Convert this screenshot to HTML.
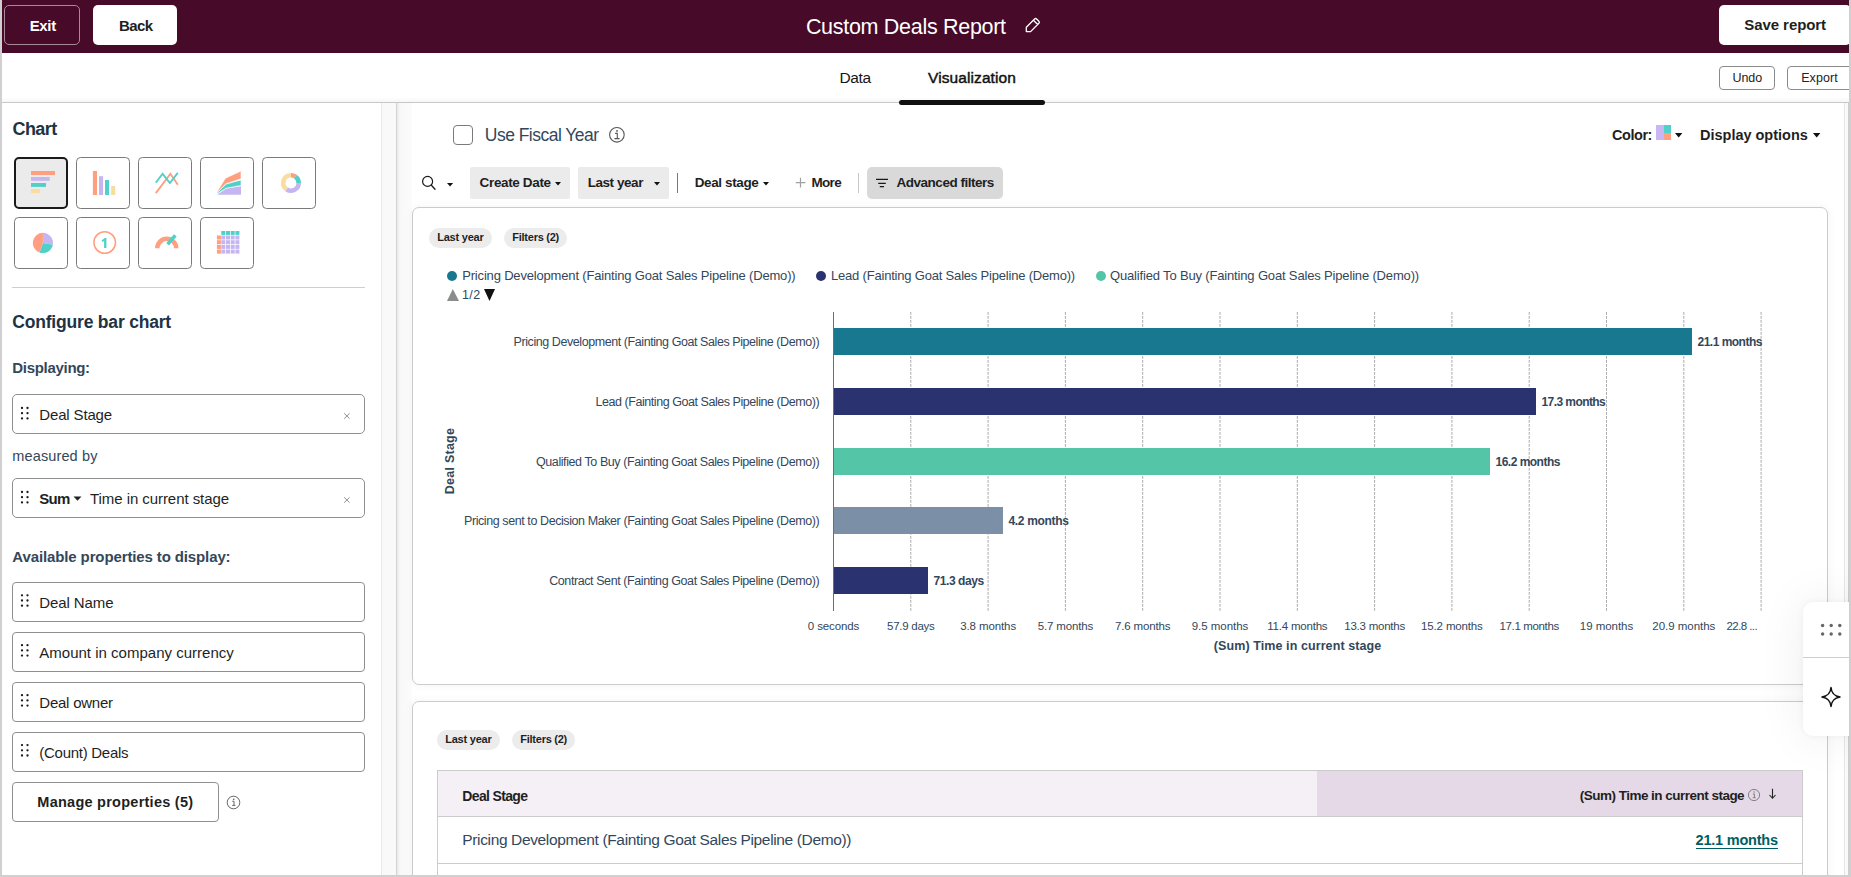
<!DOCTYPE html>
<html><head><meta charset="utf-8"><title>Custom Deals Report</title>
<style>
html,body{margin:0;padding:0;}
body{width:1851px;height:877px;overflow:hidden;position:relative;background:#fff;font-family:"Liberation Sans",sans-serif;}
.b{position:absolute;}
.t{position:absolute;white-space:nowrap;line-height:1;}
svg.b{overflow:visible;}
</style></head><body>
<div class="b" style="left:0px;top:0px;width:1851px;height:877px;background:#fff"></div>
<div class="b" style="left:0px;top:0px;width:1851px;height:53px;background:#470a29"></div>
<div class="b" style="left:4px;top:5px;width:76px;height:40px;border:1px solid #a58a97;border-radius:5px;box-sizing:border-box"></div>
<div class="t" style="left:29.70px;top:17.90px;font-size:15px;font-weight:bold;color:#ffffff;letter-spacing:-0.352px;">Exit</div>
<div class="b" style="left:93px;top:5px;width:84px;height:40px;background:#fff;border-radius:5px"></div>
<div class="t" style="left:118.90px;top:17.90px;font-size:15px;font-weight:bold;color:#1f1f1f;letter-spacing:-0.515px;">Back</div>
<div class="t" style="left:805.90px;top:16.80px;font-size:21.5px;font-weight:normal;color:#ffffff;letter-spacing:-0.296px;">Custom Deals Report</div>
<svg class="b" style="left:1024px;top:17px" width="18" height="17" viewBox="0 0 18 17"><path d="M2.3,10.3 L10.6,2 Q11.6,1 12.6,2 L14.9,4.3 Q15.9,5.3 14.9,6.3 L6.6,14.6 L2.3,14.6 Z M9.4,3.2 L13.7,7.5" fill="none" stroke="#fff" stroke-width="1.3" stroke-linejoin="round"/></svg>
<div class="b" style="left:1719px;top:5px;width:132px;height:40px;background:#fff;border-radius:5px"></div>
<div class="t" style="left:1744.30px;top:17.40px;font-size:15px;font-weight:bold;color:#1f1f1f;letter-spacing:-0.076px;">Save report</div>
<div class="b" style="left:0px;top:97px;width:1851px;height:5px;background:linear-gradient(to bottom,rgba(0,0,0,0),rgba(0,0,0,0.035))"></div>
<div class="b" style="left:0px;top:102px;width:1851px;height:1px;background:#c8c8c8"></div>
<div class="t" style="left:839.40px;top:70.08px;font-size:15.5px;font-weight:normal;color:#151515;letter-spacing:-0.360px;">Data</div>
<div class="t" style="left:928.00px;top:70.08px;font-size:15.5px;font-weight:normal;color:#111;letter-spacing:0.097px;-webkit-text-stroke:0.45px #111;">Visualization</div>
<div class="b" style="left:899px;top:100px;width:146px;height:5px;background:#111;border-radius:2.5px"></div>
<div class="b" style="left:1719px;top:66px;width:56px;height:24px;border:1px solid #8a8a8a;border-radius:4px;box-sizing:border-box"></div>
<div class="t" style="left:1732.40px;top:71.92px;font-size:12.5px;font-weight:normal;color:#222;letter-spacing:-0.020px;">Undo</div>
<div class="b" style="left:1787px;top:66px;width:70px;height:24px;border:1px solid #8a8a8a;border-radius:4px;box-sizing:border-box"></div>
<div class="t" style="left:1801.20px;top:71.92px;font-size:12.5px;font-weight:normal;color:#222;letter-spacing:0.079px;">Export</div>
<div class="b" style="left:381px;top:103px;width:15px;height:772px;background:#f9f9f9;border-left:1px solid #e8e8e8;box-sizing:border-box"></div>
<div class="b" style="left:396px;top:103px;width:1px;height:772px;background:#d2d2d2"></div>
<div class="b" style="left:397px;top:103px;width:15px;height:772px;background:linear-gradient(to right,#e9e9e9,#f8f8f8 3px,#fcfcfc)"></div>
<div class="b" style="left:0px;top:0px;width:2px;height:877px;background:#d0d0d0"></div>
<div class="b" style="left:1849px;top:0px;width:2px;height:877px;background:#d0d0d0"></div>
<div class="b" style="left:0px;top:875px;width:1851px;height:2px;background:#d0d0d0"></div>
<div class="t" style="left:12.50px;top:119.86px;font-size:18px;font-weight:bold;color:#213343;letter-spacing:-0.561px;">Chart</div>
<div class="b" style="left:14px;top:157px;width:54px;height:52px;background:#ebebeb;border:2px solid #1a1a1a;border-radius:5px;box-sizing:border-box"></div>
<div class="b" style="left:76px;top:157px;width:54px;height:52px;background:#fff;border:1.5px solid #7a7a7a;border-radius:4.5px;box-sizing:border-box"></div>
<div class="b" style="left:138px;top:157px;width:54px;height:52px;background:#fff;border:1.5px solid #7a7a7a;border-radius:4.5px;box-sizing:border-box"></div>
<div class="b" style="left:200px;top:157px;width:54px;height:52px;background:#fff;border:1.5px solid #7a7a7a;border-radius:4.5px;box-sizing:border-box"></div>
<div class="b" style="left:262px;top:157px;width:54px;height:52px;background:#fff;border:1.5px solid #7a7a7a;border-radius:4.5px;box-sizing:border-box"></div>
<div class="b" style="left:14px;top:217px;width:54px;height:52px;background:#fff;border:1.5px solid #7a7a7a;border-radius:4.5px;box-sizing:border-box"></div>
<div class="b" style="left:76px;top:217px;width:54px;height:52px;background:#fff;border:1.5px solid #7a7a7a;border-radius:4.5px;box-sizing:border-box"></div>
<div class="b" style="left:138px;top:217px;width:54px;height:52px;background:#fff;border:1.5px solid #7a7a7a;border-radius:4.5px;box-sizing:border-box"></div>
<div class="b" style="left:200px;top:217px;width:54px;height:52px;background:#fff;border:1.5px solid #7a7a7a;border-radius:4.5px;box-sizing:border-box"></div>
<svg class="b" style="left:0;top:0" width="400" height="300" viewBox="0 0 400 300">
<rect x="31" y="171" width="24" height="4" fill="#ff9f80"/>
<rect x="31" y="177" width="18.7" height="3.8" fill="#c5b6f2"/>
<rect x="31" y="183" width="15" height="3.9" fill="#4fd0c8"/>
<rect x="31" y="189" width="9" height="4" fill="#f9dca0"/>
<rect x="92.9" y="171" width="4.1" height="24" fill="#ff9f80"/>
<rect x="99" y="176.2" width="4.1" height="18.8" fill="#c5b6f2"/>
<rect x="105" y="180" width="4" height="15" fill="#4fd0c8"/>
<rect x="111.1" y="186" width="4.1" height="9" fill="#f9dca0"/>
<polyline points="155.8,193.1 170.4,173.8 177.8,184.7" fill="none" stroke="#ff9f80" stroke-width="1.9"/>
<polyline points="155.8,182.8 162.6,173.8 169.9,183 177.8,172.8" fill="none" stroke="#4fd0c8" stroke-width="1.9"/>
<polygon points="217.2,194.8 226.1,188.5 241,186.3 241,194.8" fill="#c5b6f2"/>
<polygon points="217.2,192.6 226.1,184.1 241,180 241,185.4 226.1,188.2 217.2,193.7" fill="#4fd0c8" stroke="#fff" stroke-width="0.6"/>
<polygon points="217.2,191.5 225.4,178.2 241,171.1 241,178.8 226.1,183.7 217.2,192.3" fill="#ff9f80" stroke="#fff" stroke-width="0.6"/>

<path d="M291.00,175.30 A7.7,7.7 0 0 1 295.42,176.69" fill="none" stroke="#ff9f80" stroke-width="4.6"/>
<path d="M295.42,176.69 A7.7,7.7 0 0 1 298.70,183.00" fill="none" stroke="#4fd0c8" stroke-width="4.6"/>
<path d="M298.70,183.00 A7.7,7.7 0 0 1 286.58,189.31" fill="none" stroke="#c5b6f2" stroke-width="4.6"/>
<path d="M286.58,189.31 A7.7,7.7 0 0 1 291.00,175.30" fill="none" stroke="#f9dca0" stroke-width="4.6"/>
<path d="M42.9,242.9 L42.90,232.80 A10.1,10.1 0 0 1 52.85,244.65 Z" fill="#c5b6f2"/>
<path d="M42.9,242.9 L52.85,244.65 A10.1,10.1 0 0 1 39.45,252.39 Z" fill="#4fd0c8"/>
<path d="M42.9,242.9 L39.45,252.39 A10.1,10.1 0 0 1 42.90,232.80 Z" fill="#ff9f80"/>
<circle cx="104.7" cy="242.5" r="10.8" fill="none" stroke="#ff9f80" stroke-width="1.5"/>
<path d="M101.6,240.4 L104.7,237.9 L106.4,237.9 L106.4,247.9 L104.1,247.9 L104.1,240.9 L102.5,242.1 Z" fill="#4fd0c8"/>
<path d="M157.3,248.3 A9.45,9.45 0 0 1 176.2,248.3" fill="none" stroke="#ff9f80" stroke-width="4.5"/>
<line x1="167.6" y1="244.2" x2="175.3" y2="235.4" stroke="#4fd0c8" stroke-width="3.6"/>
<rect x="221.30" y="231" width="4" height="3.9" fill="#4fd0c8"/>
<rect x="226.00" y="231" width="4" height="3.9" fill="#4fd0c8"/>
<rect x="230.70" y="231" width="4" height="3.9" fill="#4fd0c8"/>
<rect x="235.40" y="231" width="4" height="3.9" fill="#4fd0c8"/>
<rect x="216.9" y="235.50" width="4" height="4" fill="#ff9f80"/>
<rect x="221.30" y="235.50" width="4" height="4" fill="#c5b6f2"/>
<rect x="226.00" y="235.50" width="4" height="4" fill="#c5b6f2"/>
<rect x="230.70" y="235.50" width="4" height="4" fill="#c5b6f2"/>
<rect x="235.40" y="235.50" width="4" height="4" fill="#c5b6f2"/>
<rect x="216.9" y="240.20" width="4" height="4" fill="#ff9f80"/>
<rect x="221.30" y="240.20" width="4" height="4" fill="#c5b6f2"/>
<rect x="226.00" y="240.20" width="4" height="4" fill="#c5b6f2"/>
<rect x="230.70" y="240.20" width="4" height="4" fill="#c5b6f2"/>
<rect x="235.40" y="240.20" width="4" height="4" fill="#c5b6f2"/>
<rect x="216.9" y="244.90" width="4" height="4" fill="#ff9f80"/>
<rect x="221.30" y="244.90" width="4" height="4" fill="#c5b6f2"/>
<rect x="226.00" y="244.90" width="4" height="4" fill="#c5b6f2"/>
<rect x="230.70" y="244.90" width="4" height="4" fill="#c5b6f2"/>
<rect x="235.40" y="244.90" width="4" height="4" fill="#c5b6f2"/>
<rect x="216.9" y="249.60" width="4" height="4" fill="#ff9f80"/>
<rect x="221.30" y="249.60" width="4" height="4" fill="#c5b6f2"/>
<rect x="226.00" y="249.60" width="4" height="4" fill="#c5b6f2"/>
<rect x="230.70" y="249.60" width="4" height="4" fill="#c5b6f2"/>
<rect x="235.40" y="249.60" width="4" height="4" fill="#c5b6f2"/>
</svg>
<div class="b" style="left:12px;top:287px;width:353px;height:1px;background:#cfcfcf"></div>
<div class="t" style="left:12.30px;top:313.69px;font-size:17.5px;font-weight:bold;color:#213343;letter-spacing:-0.194px;">Configure bar chart</div>
<div class="t" style="left:12.30px;top:360.10px;font-size:15px;font-weight:bold;color:#33475b;letter-spacing:-0.304px;">Displaying:</div>
<div class="b" style="left:12px;top:394px;width:353px;height:40px;border:1px solid #8f8f8f;border-radius:5px;box-sizing:border-box"></div>
<svg class="b" style="left:0;top:0" width="40" height="877"><circle cx="22.0" cy="408.0" r="1.15" fill="#1a1a1a"/><circle cx="27.5" cy="408.0" r="1.15" fill="#1a1a1a"/><circle cx="22.0" cy="413.2" r="1.15" fill="#1a1a1a"/><circle cx="27.5" cy="413.2" r="1.15" fill="#1a1a1a"/><circle cx="22.0" cy="418.4" r="1.15" fill="#1a1a1a"/><circle cx="27.5" cy="418.4" r="1.15" fill="#1a1a1a"/></svg>
<div class="t" style="left:39.30px;top:407.30px;font-size:15px;font-weight:normal;color:#1f1f1f;letter-spacing:-0.152px;">Deal Stage</div>
<svg class="b" style="left:342px;top:410px" width="10" height="10"><path d="M2.2,3.3 L7.6,8.7 M7.6,3.3 L2.2,8.7" stroke="#8a8a8a" stroke-width="0.95"/></svg>
<div class="t" style="left:12.30px;top:448.73px;font-size:14.5px;font-weight:normal;color:#33475b;letter-spacing:0.126px;">measured by</div>
<div class="b" style="left:12px;top:478px;width:353px;height:40px;border:1px solid #8f8f8f;border-radius:5px;box-sizing:border-box"></div>
<svg class="b" style="left:0;top:0" width="40" height="877"><circle cx="22.0" cy="492.0" r="1.15" fill="#1a1a1a"/><circle cx="27.5" cy="492.0" r="1.15" fill="#1a1a1a"/><circle cx="22.0" cy="497.2" r="1.15" fill="#1a1a1a"/><circle cx="27.5" cy="497.2" r="1.15" fill="#1a1a1a"/><circle cx="22.0" cy="502.4" r="1.15" fill="#1a1a1a"/><circle cx="27.5" cy="502.4" r="1.15" fill="#1a1a1a"/></svg>
<div class="t" style="left:39.30px;top:491.10px;font-size:15px;font-weight:bold;color:#1f1f1f;letter-spacing:-0.768px;">Sum</div>
<svg class="b" style="left:73px;top:496px" width="10" height="6"><path d="M0.5,0.5 L8.5,0.5 L4.5,4.8 Z" fill="#222"/></svg>
<div class="t" style="left:90.00px;top:491.10px;font-size:15px;font-weight:normal;color:#1f1f1f;letter-spacing:-0.063px;">Time in current stage</div>
<svg class="b" style="left:342px;top:494px" width="10" height="10"><path d="M2.2,3.3 L7.6,8.7 M7.6,3.3 L2.2,8.7" stroke="#8a8a8a" stroke-width="0.95"/></svg>
<div class="t" style="left:12.30px;top:549.20px;font-size:15px;font-weight:bold;color:#33475b;letter-spacing:-0.119px;">Available properties to display:</div>
<div class="b" style="left:12px;top:582px;width:353px;height:40px;border:1px solid #8f8f8f;border-radius:4px;box-sizing:border-box"></div>
<svg class="b" style="left:0;top:0" width="40" height="877"><circle cx="22.0" cy="595.3" r="1.15" fill="#1a1a1a"/><circle cx="27.5" cy="595.3" r="1.15" fill="#1a1a1a"/><circle cx="22.0" cy="600.5" r="1.15" fill="#1a1a1a"/><circle cx="27.5" cy="600.5" r="1.15" fill="#1a1a1a"/><circle cx="22.0" cy="605.7" r="1.15" fill="#1a1a1a"/><circle cx="27.5" cy="605.7" r="1.15" fill="#1a1a1a"/></svg>
<div class="t" style="left:39.30px;top:594.80px;font-size:15px;font-weight:normal;color:#1f1f1f;letter-spacing:-0.092px;">Deal Name</div>
<div class="b" style="left:12px;top:632px;width:353px;height:40px;border:1px solid #8f8f8f;border-radius:4px;box-sizing:border-box"></div>
<svg class="b" style="left:0;top:0" width="40" height="877"><circle cx="22.0" cy="645.2" r="1.15" fill="#1a1a1a"/><circle cx="27.5" cy="645.2" r="1.15" fill="#1a1a1a"/><circle cx="22.0" cy="650.4" r="1.15" fill="#1a1a1a"/><circle cx="27.5" cy="650.4" r="1.15" fill="#1a1a1a"/><circle cx="22.0" cy="655.6" r="1.15" fill="#1a1a1a"/><circle cx="27.5" cy="655.6" r="1.15" fill="#1a1a1a"/></svg>
<div class="t" style="left:39.30px;top:644.70px;font-size:15px;font-weight:normal;color:#1f1f1f;letter-spacing:0.010px;">Amount in company currency</div>
<div class="b" style="left:12px;top:682px;width:353px;height:40px;border:1px solid #8f8f8f;border-radius:4px;box-sizing:border-box"></div>
<svg class="b" style="left:0;top:0" width="40" height="877"><circle cx="22.0" cy="695.2" r="1.15" fill="#1a1a1a"/><circle cx="27.5" cy="695.2" r="1.15" fill="#1a1a1a"/><circle cx="22.0" cy="700.4" r="1.15" fill="#1a1a1a"/><circle cx="27.5" cy="700.4" r="1.15" fill="#1a1a1a"/><circle cx="22.0" cy="705.6" r="1.15" fill="#1a1a1a"/><circle cx="27.5" cy="705.6" r="1.15" fill="#1a1a1a"/></svg>
<div class="t" style="left:39.30px;top:694.70px;font-size:15px;font-weight:normal;color:#1f1f1f;letter-spacing:-0.237px;">Deal owner</div>
<div class="b" style="left:12px;top:732px;width:353px;height:40px;border:1px solid #8f8f8f;border-radius:4px;box-sizing:border-box"></div>
<svg class="b" style="left:0;top:0" width="40" height="877"><circle cx="22.0" cy="745.1" r="1.15" fill="#1a1a1a"/><circle cx="27.5" cy="745.1" r="1.15" fill="#1a1a1a"/><circle cx="22.0" cy="750.3" r="1.15" fill="#1a1a1a"/><circle cx="27.5" cy="750.3" r="1.15" fill="#1a1a1a"/><circle cx="22.0" cy="755.5" r="1.15" fill="#1a1a1a"/><circle cx="27.5" cy="755.5" r="1.15" fill="#1a1a1a"/></svg>
<div class="t" style="left:39.30px;top:744.60px;font-size:15px;font-weight:normal;color:#1f1f1f;letter-spacing:-0.272px;">(Count) Deals</div>
<div class="b" style="left:12px;top:782px;width:207px;height:40px;border:1px solid #8f8f8f;border-radius:4px;box-sizing:border-box"></div>
<div class="t" style="left:37.30px;top:795.23px;font-size:14.5px;font-weight:bold;color:#1f1f1f;letter-spacing:0.254px;">Manage properties (5)</div>
<svg class="b" style="left:226px;top:795px" width="15" height="15"><circle cx="7.5" cy="7.5" r="6.3" fill="none" stroke="#666" stroke-width="1"/><path d="M6.3,6.3 L8,6.3 L8,10.3 M6.2,10.4 L9.4,10.4" fill="none" stroke="#666" stroke-width="1"/><circle cx="7.7" cy="4.4" r="0.8" fill="#666"/></svg>
<div class="b" style="left:453px;top:125px;width:19.6px;height:19.6px;border:1.3px solid #7a7a7a;border-radius:4px;box-sizing:border-box"></div>
<div class="t" style="left:484.80px;top:127.19px;font-size:17.5px;font-weight:normal;color:#33475b;letter-spacing:-0.519px;">Use Fiscal Year</div>
<svg class="b" style="left:608px;top:126px" width="18" height="18"><circle cx="8.9" cy="8.8" r="7.3" fill="none" stroke="#555" stroke-width="1.1"/><path d="M7.1,7.4 L9.3,7.4 L9.3,12.4 M6.4,12.6 L11.6,12.6" fill="none" stroke="#555" stroke-width="1.1"/><circle cx="9" cy="4.9" r="0.9" fill="#555"/></svg>
<div class="t" style="left:1612.00px;top:127.63px;font-size:14.5px;font-weight:bold;color:#1f1f1f;letter-spacing:-0.448px;">Color:</div>
<div class="b" style="left:1656px;top:125px;width:7.5px;height:7.5px;background:#c8b7f2"></div>
<div class="b" style="left:1663.5px;top:125px;width:7.5px;height:7.5px;background:#4fd1c9"></div>
<div class="b" style="left:1656px;top:132.5px;width:7.5px;height:7.5px;background:#c8b7f2"></div>
<div class="b" style="left:1663.5px;top:132.5px;width:7.5px;height:7.5px;background:#ff9f80"></div>
<svg class="b" style="left:1675.2px;top:133px" width="8.4" height="5.4"><path d="M0,0 L7.4,0 L3.7,4.4 Z" fill="#111"/></svg>
<div class="t" style="left:1700.00px;top:127.63px;font-size:14.5px;font-weight:bold;color:#1f1f1f;letter-spacing:-0.011px;">Display options</div>
<svg class="b" style="left:1812.7px;top:133px" width="8.4" height="5.4"><path d="M0,0 L7.4,0 L3.7,4.4 Z" fill="#111"/></svg>
<svg class="b" style="left:420px;top:174px" width="18" height="18"><circle cx="7.6" cy="7.4" r="5.0" fill="none" stroke="#1a1a1a" stroke-width="1.2"/><path d="M11.4,11.3 L15,15.3" stroke="#1a1a1a" stroke-width="1.3" stroke-linecap="round"/></svg>
<svg class="b" style="left:447px;top:183px" width="7.1" height="4.6"><path d="M0,0 L6.1,0 L3.05,3.6 Z" fill="#111"/></svg>
<div class="b" style="left:470px;top:167px;width:100px;height:32px;background:#ebebeb;border-radius:2px"></div>
<div class="t" style="left:479.60px;top:175.77px;font-size:13.5px;font-weight:bold;color:#1f1f1f;letter-spacing:-0.358px;">Create Date</div>
<svg class="b" style="left:555.2px;top:182.4px" width="7" height="4.6"><path d="M0,0 L6,0 L3.0,3.6 Z" fill="#111"/></svg>
<div class="b" style="left:578px;top:167px;width:91px;height:32px;background:#ebebeb;border-radius:2px"></div>
<div class="t" style="left:587.70px;top:175.77px;font-size:13.5px;font-weight:bold;color:#1f1f1f;letter-spacing:-0.443px;">Last year</div>
<svg class="b" style="left:653.8px;top:182.4px" width="7" height="4.6"><path d="M0,0 L6,0 L3.0,3.6 Z" fill="#111"/></svg>
<div class="b" style="left:677px;top:173px;width:1.2px;height:20px;background:#7a7a7a"></div>
<div class="t" style="left:694.70px;top:175.77px;font-size:13.5px;font-weight:bold;color:#1f1f1f;letter-spacing:-0.373px;">Deal stage</div>
<svg class="b" style="left:762.5px;top:182.4px" width="7" height="4.6"><path d="M0,0 L6,0 L3.0,3.6 Z" fill="#111"/></svg>
<svg class="b" style="left:795px;top:177px" width="12" height="12"><path d="M5.5,0.8 L5.5,10.5 M0.8,5.6 L10.5,5.6" stroke="#a0a0a0" stroke-width="1.2"/></svg>
<div class="t" style="left:811.50px;top:175.77px;font-size:13.5px;font-weight:bold;color:#1f1f1f;letter-spacing:-0.688px;">More</div>
<div class="b" style="left:858px;top:173px;width:1.2px;height:20px;background:#c8c8c8"></div>
<div class="b" style="left:867px;top:167px;width:136px;height:32px;background:#d9d9d9;border-radius:5px"></div>
<svg class="b" style="left:874px;top:176px" width="16" height="14"><path d="M2,3.45 L14,3.45 M4.2,7.3 L11.8,7.3 M5.8,10.55 L10,10.55" stroke="#1a1a1a" stroke-width="1.2"/></svg>
<div class="t" style="left:896.60px;top:175.77px;font-size:13.5px;font-weight:bold;color:#1f1f1f;letter-spacing:-0.496px;">Advanced filters</div>
<div class="b" style="left:412px;top:207px;width:1416px;height:478px;border:1px solid #cbcbcb;border-radius:7px;box-sizing:border-box;box-shadow:0 0 10px rgba(0,0,0,0.05);background:#fff"></div>
<div class="b" style="left:429px;top:228px;width:63px;height:20px;background:#ececec;border-radius:10.0px"></div>
<div class="t" style="left:437.20px;top:232.29px;font-size:11px;font-weight:bold;color:#1f1f1f;letter-spacing:-0.223px;">Last year</div>
<div class="b" style="left:504px;top:228px;width:63px;height:20px;background:#ececec;border-radius:10.0px"></div>
<div class="t" style="left:512.30px;top:232.29px;font-size:11px;font-weight:bold;color:#1f1f1f;letter-spacing:-0.255px;">Filters (2)</div>
<svg class="b" style="left:447px;top:271px" width="10" height="10"><circle cx="5" cy="5" r="5" fill="#17788f"/></svg>
<div class="t" style="left:462.20px;top:268.60px;font-size:13px;font-weight:normal;color:#33475b;letter-spacing:-0.174px;">Pricing Development (Fainting Goat Sales Pipeline (Demo))</div>
<svg class="b" style="left:816px;top:271px" width="10" height="10"><circle cx="5" cy="5" r="5" fill="#2b3270"/></svg>
<div class="t" style="left:831.00px;top:268.60px;font-size:13px;font-weight:normal;color:#33475b;letter-spacing:-0.195px;">Lead (Fainting Goat Sales Pipeline (Demo))</div>
<svg class="b" style="left:1096px;top:271px" width="10" height="10"><circle cx="5" cy="5" r="5" fill="#54c5a6"/></svg>
<div class="t" style="left:1110.00px;top:268.60px;font-size:13px;font-weight:normal;color:#33475b;letter-spacing:-0.161px;">Qualified To Buy (Fainting Goat Sales Pipeline (Demo))</div>
<svg class="b" style="left:446px;top:288px" width="52" height="14"><path d="M1,13 L6.8,1 L13,13 Z" fill="#8c8c8c"/><path d="M38,1 L49,1 L43.5,13 Z" fill="#111"/></svg>
<div class="t" style="left:462.00px;top:288.92px;font-size:12.5px;font-weight:normal;color:#33475b;letter-spacing:0.374px;">1/2</div>
<svg class="b" style="left:0;top:0" width="1851" height="877">
<line x1="910.8" y1="312" x2="910.8" y2="611" stroke="#ababab" stroke-width="1" stroke-dasharray="2.8,1.2"/>
<line x1="988.1" y1="312" x2="988.1" y2="611" stroke="#ababab" stroke-width="1" stroke-dasharray="2.8,1.2"/>
<line x1="1065.4" y1="312" x2="1065.4" y2="611" stroke="#ababab" stroke-width="1" stroke-dasharray="2.8,1.2"/>
<line x1="1142.7" y1="312" x2="1142.7" y2="611" stroke="#ababab" stroke-width="1" stroke-dasharray="2.8,1.2"/>
<line x1="1220.0" y1="312" x2="1220.0" y2="611" stroke="#ababab" stroke-width="1" stroke-dasharray="2.8,1.2"/>
<line x1="1297.3" y1="312" x2="1297.3" y2="611" stroke="#ababab" stroke-width="1" stroke-dasharray="2.8,1.2"/>
<line x1="1374.6" y1="312" x2="1374.6" y2="611" stroke="#ababab" stroke-width="1" stroke-dasharray="2.8,1.2"/>
<line x1="1451.9" y1="312" x2="1451.9" y2="611" stroke="#ababab" stroke-width="1" stroke-dasharray="2.8,1.2"/>
<line x1="1529.2" y1="312" x2="1529.2" y2="611" stroke="#ababab" stroke-width="1" stroke-dasharray="2.8,1.2"/>
<line x1="1606.5" y1="312" x2="1606.5" y2="611" stroke="#ababab" stroke-width="1" stroke-dasharray="2.8,1.2"/>
<line x1="1683.8" y1="312" x2="1683.8" y2="611" stroke="#ababab" stroke-width="1" stroke-dasharray="2.8,1.2"/>
<line x1="1761.1" y1="312" x2="1761.1" y2="611" stroke="#ababab" stroke-width="1" stroke-dasharray="2.8,1.2"/>
<line x1="833.5" y1="312" x2="833.5" y2="611" stroke="#6f6f6f" stroke-width="1"/>
</svg>
<div class="b" style="left:834px;top:328px;width:858px;height:27px;background:#17788f"></div>
<div class="t" style="left:513.60px;top:335.92px;font-size:12.5px;font-weight:normal;color:#33475b;letter-spacing:-0.428px;">Pricing Development (Fainting Goat Sales Pipeline (Demo))</div>
<div class="t" style="left:1697.50px;top:336.34px;font-size:12px;font-weight:bold;color:#33475b;letter-spacing:-0.511px;">21.1 months</div>
<div class="b" style="left:834px;top:388px;width:702px;height:27px;background:#2b3270"></div>
<div class="t" style="left:595.50px;top:395.92px;font-size:12.5px;font-weight:normal;color:#33475b;letter-spacing:-0.447px;">Lead (Fainting Goat Sales Pipeline (Demo))</div>
<div class="t" style="left:1541.50px;top:396.34px;font-size:12px;font-weight:bold;color:#33475b;letter-spacing:-0.574px;">17.3 months</div>
<div class="b" style="left:834px;top:448px;width:656px;height:27px;background:#54c5a6"></div>
<div class="t" style="left:536.00px;top:455.92px;font-size:12.5px;font-weight:normal;color:#33475b;letter-spacing:-0.412px;">Qualified To Buy (Fainting Goat Sales Pipeline (Demo))</div>
<div class="t" style="left:1495.50px;top:456.34px;font-size:12px;font-weight:bold;color:#33475b;letter-spacing:-0.511px;">16.2 months</div>
<div class="b" style="left:834px;top:507px;width:169px;height:27px;background:#7b90a7"></div>
<div class="t" style="left:464.00px;top:514.92px;font-size:12.5px;font-weight:normal;color:#33475b;letter-spacing:-0.416px;">Pricing sent to Decision Maker (Fainting Goat Sales Pipeline (Demo))</div>
<div class="t" style="left:1008.50px;top:515.34px;font-size:12px;font-weight:bold;color:#33475b;letter-spacing:-0.335px;">4.2 months</div>
<div class="b" style="left:834px;top:567px;width:94px;height:27px;background:#2b3270"></div>
<div class="t" style="left:549.20px;top:574.92px;font-size:12.5px;font-weight:normal;color:#33475b;letter-spacing:-0.414px;">Contract Sent (Fainting Goat Sales Pipeline (Demo))</div>
<div class="t" style="left:933.50px;top:575.34px;font-size:12px;font-weight:bold;color:#33475b;letter-spacing:-0.427px;">71.3 days</div>
<div class="t" style="left:807.75px;top:621.07px;font-size:11.5px;font-weight:normal;color:#33475b;letter-spacing:-0.102px;">0 seconds</div>
<div class="t" style="left:887.05px;top:621.07px;font-size:11.5px;font-weight:normal;color:#33475b;letter-spacing:-0.263px;">57.9 days</div>
<div class="t" style="left:960.15px;top:621.07px;font-size:11.5px;font-weight:normal;color:#33475b;letter-spacing:-0.099px;">3.8 months</div>
<div class="t" style="left:1037.70px;top:621.07px;font-size:11.5px;font-weight:normal;color:#33475b;letter-spacing:-0.149px;">5.7 months</div>
<div class="t" style="left:1114.95px;top:621.07px;font-size:11.5px;font-weight:normal;color:#33475b;letter-spacing:-0.139px;">7.6 months</div>
<div class="t" style="left:1191.65px;top:621.07px;font-size:11.5px;font-weight:normal;color:#33475b;letter-spacing:-0.019px;">9.5 months</div>
<div class="t" style="left:1267.20px;top:621.07px;font-size:11.5px;font-weight:normal;color:#33475b;letter-spacing:-0.203px;">11.4 months</div>
<div class="t" style="left:1344.30px;top:621.07px;font-size:11.5px;font-weight:normal;color:#33475b;letter-spacing:-0.244px;">13.3 months</div>
<div class="t" style="left:1421.10px;top:621.07px;font-size:11.5px;font-weight:normal;color:#33475b;letter-spacing:-0.153px;">15.2 months</div>
<div class="t" style="left:1499.55px;top:621.07px;font-size:11.5px;font-weight:normal;color:#33475b;letter-spacing:-0.362px;">17.1 months</div>
<div class="t" style="left:1579.80px;top:621.07px;font-size:11.5px;font-weight:normal;color:#33475b;letter-spacing:-0.033px;">19 months</div>
<div class="t" style="left:1652.30px;top:621.07px;font-size:11.5px;font-weight:normal;color:#33475b;letter-spacing:-0.026px;">20.9 months</div>
<div class="t" style="left:1726.50px;top:621.07px;font-size:11.5px;font-weight:normal;color:#33475b;letter-spacing:-0.583px;">22.8 ...</div>
<div class="t" style="left:1213.80px;top:640.42px;font-size:12.5px;font-weight:bold;color:#33475b;letter-spacing:0.090px;">(Sum) Time in current stage</div>
<div class="t" style="left:409.8px;top:452.8px;width:80px;height:16px;line-height:16px;text-align:center;transform:rotate(-90deg);font-size:12.5px;font-weight:bold;color:#33475b;letter-spacing:0.25px">Deal Stage</div>
<div class="b" style="left:412px;top:701px;width:1416px;height:200px;border:1px solid #cbcbcb;border-radius:7px;box-sizing:border-box;box-shadow:0 0 10px rgba(0,0,0,0.05);background:#fff"></div>
<div class="b" style="left:437px;top:730px;width:63px;height:20px;background:#ececec;border-radius:10.0px"></div>
<div class="t" style="left:445.20px;top:734.29px;font-size:11px;font-weight:bold;color:#1f1f1f;letter-spacing:-0.223px;">Last year</div>
<div class="b" style="left:512px;top:730px;width:63px;height:20px;background:#ececec;border-radius:10.0px"></div>
<div class="t" style="left:520.30px;top:734.29px;font-size:11px;font-weight:bold;color:#1f1f1f;letter-spacing:-0.255px;">Filters (2)</div>
<div class="b" style="left:437px;top:770px;width:1366px;height:120px;border:1px solid #cbcbcb;box-sizing:border-box"></div>
<div class="b" style="left:438px;top:771px;width:879px;height:45px;background:#f5f0f6"></div>
<div class="b" style="left:1317px;top:771px;width:485px;height:45px;background:#e5d9e7"></div>
<div class="b" style="left:438px;top:816px;width:1364px;height:1px;background:#cbcbcb"></div>
<div class="b" style="left:438px;top:863px;width:1364px;height:1px;background:#cbcbcb"></div>
<div class="t" style="left:462.30px;top:788.75px;font-size:14px;font-weight:bold;color:#1f1f1f;letter-spacing:-0.658px;">Deal Stage</div>
<div class="t" style="left:1579.80px;top:789.27px;font-size:13.5px;font-weight:bold;color:#1f1f1f;letter-spacing:-0.518px;">(Sum) Time in current stage</div>
<svg class="b" style="left:1747px;top:788px" width="14" height="14"><circle cx="7" cy="7" r="5.6" fill="none" stroke="#777" stroke-width="0.9"/><path d="M5.9,6 L7.4,6 L7.4,9.6 M5.8,9.7 L8.6,9.7" fill="none" stroke="#777" stroke-width="0.9"/><circle cx="7.2" cy="4" r="0.7" fill="#777"/></svg>
<svg class="b" style="left:1767.5px;top:788px" width="10" height="12"><path d="M4.5,0.8 L4.5,10 M1.5,7 L4.5,10.3 L7.5,7" fill="none" stroke="#222" stroke-width="1.1"/></svg>
<div class="t" style="left:462.30px;top:832.48px;font-size:15.5px;font-weight:normal;color:#33475b;letter-spacing:-0.358px;">Pricing Development (Fainting Goat Sales Pipeline (Demo))</div>
<div class="t" style="left:1695.60px;top:832.63px;font-size:14.5px;font-weight:bold;color:#005e62;letter-spacing:-0.219px;">21.1 months</div>
<div class="b" style="left:1695.6px;top:848px;width:82.2px;height:1.3px;background:#005e62"></div>
<div class="b" style="left:1844px;top:103px;width:5px;height:772px;background:#fafafa;border-left:1px solid #e6e6e6;border-right:1px solid #cdcdcd;box-sizing:border-box"></div>
<div class="b" style="left:1803px;top:602px;width:60px;height:134px;background:#fff;border-radius:10px;box-shadow:0 0 50px rgba(0,0,0,0.07),0 0 6px rgba(0,0,0,0.05)"></div>
<div class="b" style="left:1803px;top:657px;width:48px;height:1px;background:#cfcfcf"></div>
<svg class="b" style="left:1815px;top:619px" width="32" height="22"><circle cx="7.6" cy="6.5" r="1.7" fill="#666"/><circle cx="16.2" cy="6.5" r="1.7" fill="#666"/><circle cx="24.8" cy="6.5" r="1.7" fill="#666"/><circle cx="7.6" cy="15.0" r="1.7" fill="#666"/><circle cx="16.2" cy="15.0" r="1.7" fill="#666"/><circle cx="24.8" cy="15.0" r="1.7" fill="#666"/></svg>
<svg class="b" style="left:1820px;top:686px" width="22" height="22"><path d="M11,1.5 Q11.6,9.7 20,11 Q11.6,12.3 11,20.5 Q10.4,12.3 2,11 Q10.4,9.7 11,1.5 Z" fill="none" stroke="#111" stroke-width="1.5" stroke-linejoin="round"/></svg>
<div class="b" style="left:0px;top:0px;width:2px;height:877px;background:#d0d0d0"></div>
<div class="b" style="left:1849px;top:0px;width:2px;height:877px;background:#d0d0d0"></div>
<div class="b" style="left:0px;top:875px;width:1851px;height:2px;background:#d0d0d0"></div>
</body></html>
